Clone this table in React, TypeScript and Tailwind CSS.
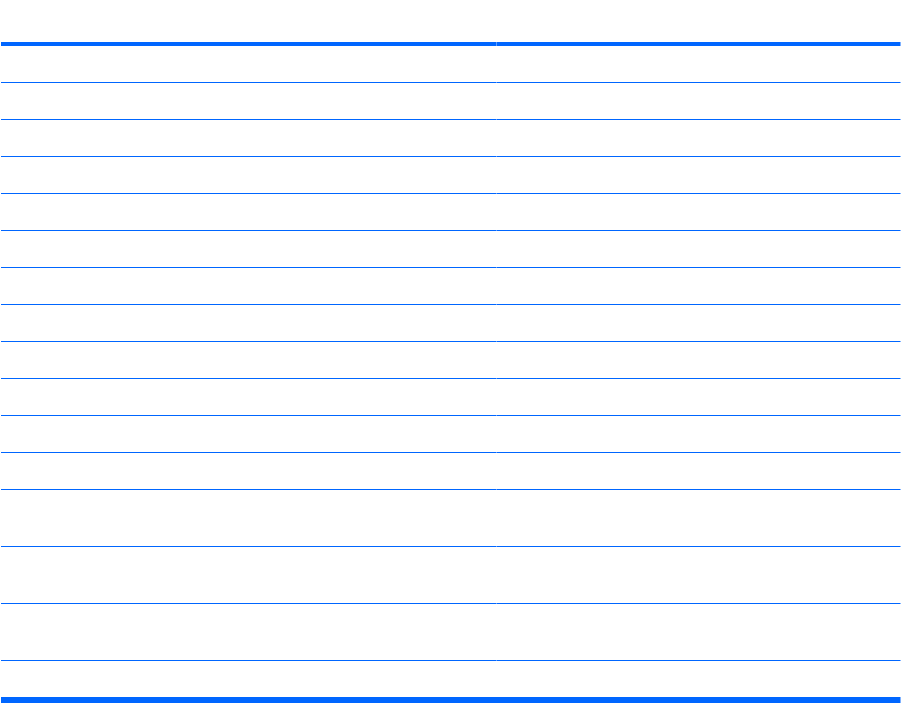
const rows: { h: string }[] = [
  ...Array.from({ length: 12 }, () => ({ h: "h-[36px]" })),
  { h: "h-[56px]" },
  { h: "h-[56px]" },
  { h: "h-[56px]" },
  { h: "h-[36px]" },
];

function Rule({ kind }: { kind: "thin" | "top" | "bottom" }) {
  if (kind === "bottom") {
    return (
      <div className="grid grid-cols-[899px_1px]">
        <div className="h-[6px] bg-[#0066ff]" />
        <div className="h-[6px] bg-[#7fb2ff]" />
      </div>
    );
  }
  const h = kind === "top" ? "h-[4px]" : "h-[1px]";
  return (
    <div className="grid grid-cols-[495px_1px_403px_1px]">
      <div className={`${h} bg-[#0066ff]`} />
      <div className={`${h} bg-[#5c9dff]`} />
      <div className={`${h} bg-[#0066ff]`} />
      <div className={`${h} bg-[#7fb2ff]`} />
    </div>
  );
}

export default function App() {
  return (
    <div className="w-[901px] h-[703px] bg-white pl-[1px] flex flex-col">
      <div className="h-[42px] shrink-0" />
      <Rule kind="top" />
      {rows.map((r, i) => (
        <div key={i} className="flex flex-col shrink-0">
          <div className={`${r.h} grid grid-cols-[495px_404px]`}>
            <div />
            <div />
          </div>
          <Rule kind={i === rows.length - 1 ? "bottom" : "thin"} />
        </div>
      ))}
    </div>
  );
}
